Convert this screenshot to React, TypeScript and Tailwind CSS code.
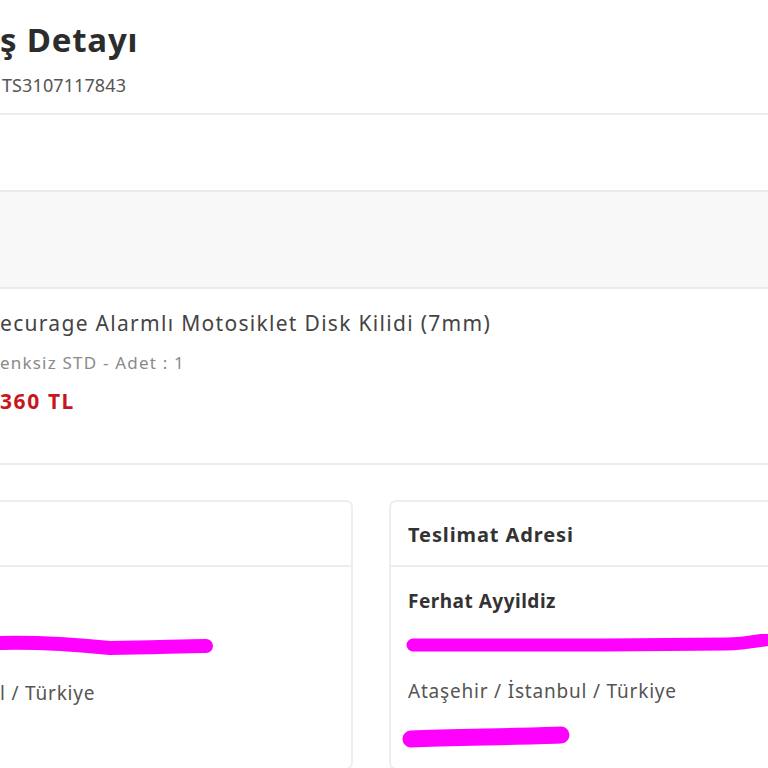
import React from "react";

function Redaction({ d, width, height, stroke = 13 }: { d: string; width: number; height: number; stroke?: number }) {
  return (
    <svg width={width} height={height} viewBox={`0 0 ${width} ${height}`} className="block">
      <path d={d} fill="none" stroke="#ff00ff" strokeWidth={stroke} strokeLinecap="round" strokeLinejoin="round" />
    </svg>
  );
}

export default function App() {
  return (
    <div
      className="w-[768px] h-[768px] overflow-hidden bg-white text-[#333]"
      style={{ fontFamily: '"Noto Sans", "Open Sans", sans-serif' }}
    >
      {/* page header */}
      <div className="h-[115px] border-b-2 border-[#ececec] pt-[19px]">
        <h1 className="text-[33px] leading-[42px] font-bold text-[#2c2c2c] tracking-[0.8px]">ş Detayı</h1>
        <div className="mt-[12px] pl-[2px] text-[18px] leading-[24px] text-[#555] tracking-[0.1px]">TS3107117843</div>
      </div>

      {/* status strip */}
      <div className="h-[75px] bg-white" />
      <div className="h-[99px] border-y-2 border-[#ebebeb] bg-[#f8f8f8]" />

      {/* ordered item */}
      <div className="h-[176px] border-b-2 border-[#ececec] pt-[19px]">
        <div className="text-[21px] leading-[30px] text-[#444] tracking-[1.3px]">ecurage Alarmlı Motosiklet Disk Kilidi (7mm)</div>
        <div className="mt-[13px] text-[17px] leading-[24px] text-[#8a8a8a] tracking-[1.2px]">enksiz STD - Adet : 1</div>
        <div className="mt-[12px] text-[21px] leading-[28px] font-bold text-[#c8161e] tracking-[1.6px]">360 TL</div>
      </div>

      {/* address cards */}
      <div className="mt-[35px] flex gap-[36px]">
        <div className="w-[353px] h-[270px] shrink-0 rounded-r-[7px] border-2 border-l-0 border-[#eeeeee]">
          <div className="h-[65px] border-b-2 border-[#ededed]" />
          <div className="pt-[66px]">
            <Redaction width={215} height={24} stroke={14} d="M0 10 C40 9 80 12 110 15 C150 15 180 13 206 13" />
            <div className="mt-[23px] text-[19px] leading-[26px] text-[#555] tracking-[0.8px]">l / Türkiye</div>
          </div>
        </div>

        <div className="flex-1 h-[270px] rounded-l-[7px] border-2 border-r-0 border-[#eeeeee]">
          <div className="h-[65px] border-b-2 border-[#ededed] px-[17px] flex items-center pt-[3px]">
            <span className="text-[20px] font-bold text-[#333] tracking-[0.9px]">Teslimat Adresi</span>
          </div>
          <div className="px-[17px] pt-[21px]">
            <div className="text-[19px] leading-[26px] font-bold text-[#333] tracking-[0.5px]">Ferhat Ayyildiz</div>
            <div className="mt-[20px] -ml-[2px]">
              <Redaction width={380} height={22} stroke={13} d="M7 11 L200 11 L320 10 C340 10 355 6 372 4" />
            </div>
            <div className="mt-[22px] text-[19px] leading-[26px] text-[#555] tracking-[0.8px]">Ataşehir / İstanbul / Türkiye</div>
            <div className="mt-[20px] -ml-[7px]">
              <Redaction width={175} height={26} stroke={17} d="M10 15 C50 13 110 13 160 11" />
            </div>
          </div>
        </div>
      </div>
    </div>
  );
}
